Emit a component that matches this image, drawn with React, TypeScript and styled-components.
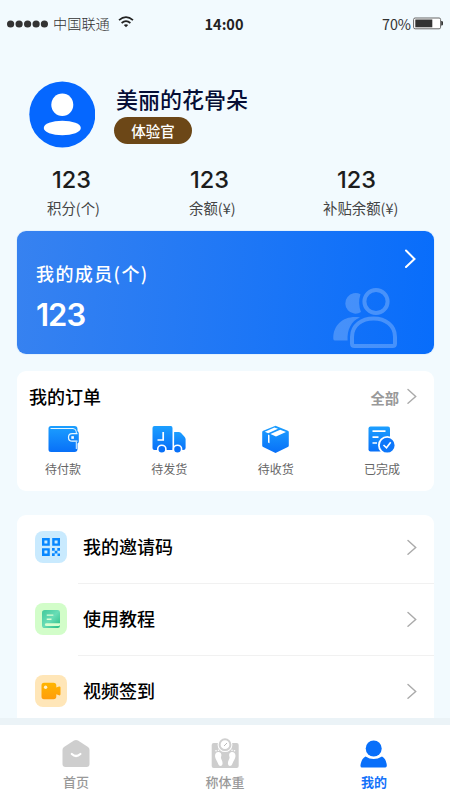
import React from "react";
import styled, { createGlobalStyle } from "styled-components";

const GlobalStyle = createGlobalStyle`
  * { box-sizing: border-box; }
  body {
    margin: 0;
    background: #f2fafe;
    font-family: "Noto Sans CJK SC", "Noto Sans", sans-serif;
    color: #000;
  }
  svg { display: block; flex: none; }
`;

const Screen = styled.div`
  width: 450px;
  height: 800px;
  overflow: hidden;
  display: flex;
  flex-direction: column;
  background: #f2fafe;
`;

const StatusBar = styled.header`
  height: 48px;
  flex: none;
  display: grid;
  grid-template-columns: 1fr auto 1fr;
  align-items: center;
  padding: 0 7px 1px;
  color: #333;
`;

const StatusGroup = styled.div<{ $end?: boolean }>`
  display: flex;
  align-items: center;
  justify-content: ${(p) => (p.$end ? "flex-end" : "flex-start")};
`;

const Carrier = styled.span`
  margin: -2px 8px 0 5px;
  font-size: 14.2px;
  line-height: 20px;
  font-weight: 300;
`;

const Clock = styled.span`
  font-size: 14.5px;
  line-height: 20px;
  font-weight: 700;
  color: #222;
  transform: translateX(-1px);
`;

const Percent = styled.span`
  margin-right: 2px;
  font-size: 14.3px;
  line-height: 20px;
`;

const Profile = styled.section`
  height: 106px;
  flex: none;
  display: flex;
  padding: 33px 0 0 29px;
`;

const ProfileText = styled.div`
  display: flex;
  flex-direction: column;
  align-items: flex-start;
  padding: 3px 0 0 19px;
`;

const Name = styled.h1`
  margin: 0 0 0 2px;
  font-size: 22px;
  line-height: 28px;
  font-weight: 500;
  color: #050d35;
`;

const Badge = styled.span`
  width: 78px;
  height: 27px;
  margin-top: 5px;
  border-radius: 14px;
  background: #6c4717;
  color: #fff;
  text-align: center;
  font-size: 14.5px;
  line-height: 27px;
  font-weight: 500;
`;

const Stats = styled.section`
  height: 77px;
  flex: none;
  display: flex;
  padding: 11px 0 0 47px;
`;

const Stat = styled.div<{ $width: number }>`
  width: ${(p) => p.$width}px;
  flex: none;
`;

const StatValue = styled.div<{ $indent: number }>`
  padding-left: ${(p) => p.$indent}px;
  font-family: Inter, sans-serif;
  font-size: 23.5px;
  line-height: 30px;
  font-weight: 500;
  color: #1c1c1c;
`;

const StatLabel = styled.div`
  margin-top: 3px;
  font-size: 14.4px;
  line-height: 20px;
  color: #444;
`;

const MembersCard = styled.section`
  width: 417px;
  height: 123px;
  flex: none;
  margin-left: 17px;
  padding: 17px 18px 5px 19px;
  display: flex;
  justify-content: space-between;
  border-radius: 9px;
  background: linear-gradient(94deg, #3782f0 0%, #086dfb 100%);
  box-shadow: 0 0 0 1px #e4f2fd;
  color: #fff;
`;

const MembersTitle = styled.h2`
  margin: 12px 0 0;
  font-size: 18px;
  line-height: 26px;
  font-weight: 500;
  letter-spacing: 1.4px;
`;

const MembersCount = styled.div`
  margin-top: 8px;
  font-family: Inter, sans-serif;
  font-size: 31px;
  line-height: 42px;
  font-weight: 600;
  letter-spacing: -1px;
`;

const MembersSide = styled.div`
  display: flex;
  flex-direction: column;
  align-items: flex-end;
  justify-content: space-between;
`;

const PeopleSlot = styled.div`
  margin-right: 18px;
`;

const Card = styled.section<{ $height: number; $top: number; $open?: boolean }>`
  width: 417px;
  height: ${(p) => p.$height}px;
  flex: none;
  margin: ${(p) => p.$top}px 0 0 17px;
  border-radius: ${(p) => (p.$open ? "9px 9px 0 0" : "9px")};
  background: #fff;
`;

const OrdersHead = styled.div`
  height: 50px;
  display: flex;
  align-items: center;
  justify-content: space-between;
  padding: 0 17px 0 12px;
`;

const OrdersTitle = styled.h2`
  margin: 0;
  font-size: 18px;
  line-height: 26px;
  font-weight: 500;
`;

const AllLink = styled.span`
  display: flex;
  align-items: center;
  gap: 8px;
  font-size: 14.3px;
  line-height: 20px;
  font-weight: 700;
  color: #999;

  span { padding-top: 4px; }
`;

const OrderTabs = styled.div`
  display: flex;
  justify-content: space-between;
  padding: 4px 33px 0 27px;
`;

const OrderTab = styled.div`
  width: 38px;
  display: flex;
  flex-direction: column;
  align-items: center;
  white-space: nowrap;
  font-size: 12px;
  line-height: 18px;
  color: #666;

  svg { margin-bottom: 7px; }
`;

const MenuRow = styled.div`
  height: 72px;
  display: flex;
  align-items: flex-start;
  padding-left: 18px;
`;

const MenuTile = styled.div<{ $color: string }>`
  width: 32px;
  height: 32px;
  flex: none;
  margin: 16px 11px 0 0;
  display: grid;
  place-items: center;
  border-radius: 8px;
  background: ${(p) => p.$color};
`;

const MenuBody = styled.div<{ $line: boolean }>`
  flex: 1;
  height: 69px;
  display: flex;
  align-items: center;
  justify-content: space-between;
  padding: 0 17px 5px 5px;
  border-bottom: 1px solid ${(p) => (p.$line ? "#f1f1f1" : "transparent")};
  font-size: 18px;
  line-height: 26px;
  font-weight: 500;
`;

const MenuLabel = styled.span`
  padding-bottom: 2px;
`;

const TabBar = styled.nav`
  height: 82px;
  flex: none;
  display: flex;
  justify-content: space-between;
  padding: 13px 56px 0 56px;
  border-top: 7px solid #ebf3f7;
  background: #fff;
`;

const TabItem = styled.div<{ $active?: boolean }>`
  width: 40px;
  display: flex;
  flex-direction: column;
  align-items: center;
  white-space: nowrap;
  font-size: 13px;
  line-height: 20px;
  font-weight: ${(p) => (p.$active ? 700 : 500)};
  color: ${(p) => (p.$active ? "#1472fa" : "#999")};

  svg { margin-bottom: 4px; }
`;

const SignalDots = () => (
  <svg width="41" height="8" viewBox="0 0 41 8" fill="#333">
    {[3.6, 12.1, 20.6, 29.1, 37.4].map((x) => (
      <circle key={x} cx={x} cy="4" r="3.6" />
    ))}
  </svg>
);

const Wifi = () => (
  <svg width="16" height="15" viewBox="0 0 16 15" fill="none" stroke="#222" strokeWidth="1.7">
    <path d="M1 4.2Q8-1.8 15 4.2M3.6 7Q8 3.2 12.4 7" />
    <path d="M5.8 9Q8 7.3 10.2 9L8 11.2Z" fill="#222" stroke="none" />
  </svg>
);

const Battery = () => (
  <svg width="30" height="13" viewBox="0 0 30 13">
    <rect x=".6" y="1" width="27" height="10.8" rx="1.5" fill="#fff" stroke="#666" />
    <rect x="2.3" y="2.5" width="17" height="7.8" fill="#333" />
    <path d="M28.2 4h1l.8 1v2.5l-.8 1h-1z" fill="#333" />
  </svg>
);

const Avatar = () => (
  <svg width="66" height="67" viewBox="0 0 66 67">
    <circle cx="33.3" cy="33.5" r="33" fill="#0567ff" />
    <ellipse cx="33.3" cy="23.7" rx="11" ry="11.3" fill="#fff" />
    <ellipse cx="33.3" cy="47" rx="18.5" ry="7.3" fill="#fff" />
  </svg>
);

const Chevron = ({ large }: { large?: boolean }) => (
  <svg
    width={large ? 12 : 10}
    height={large ? 20 : 16}
    viewBox={large ? "0 0 12 20" : "0 0 10 16"}
    fill="none"
    stroke={large ? "#fff" : "#aaa"}
    strokeWidth={large ? 2 : 1.4}
    strokeLinecap="round"
  >
    <path d={large ? "M2 2.5 10.5 11 2 19" : "M1 1.5 8.7 8.5 1 15.3"} />
  </svg>
);

const People = () => (
  <svg width="65" height="62" viewBox="332 287 65 62">
    <g fill="#fff" fillOpacity=".22">
      <path d="M359.5 294.3a10.3 10.3 0 1 0 .5 17.8Q356.5 303 359.5 294.3Z" />
      <path d="M359 317.5C344 315 332.3 324 332.3 338v1q0 1.500 2 1.500h12.300C346 330 350 321 359 317.500Z" />
    </g>
    <g fill="none" stroke="#fff" strokeOpacity=".24" strokeWidth="4">
      <circle cx="375" cy="301.500" r="11.600" />
      <path d="M351 343.500V337C351 325 361 318.600 372.500 318.600S394 325 394 337V343.500Q394 346 391.500 346H353.500Q351 346 351 343.500Z" />
    </g>
  </svg>
);

const BlueFill = ({ id }: { id: string }) => (
  <defs>
    <linearGradient id={id} x1="0" y1="0" x2="0" y2="1">
      <stop offset="0" stopColor="#1c9fff" />
      <stop offset="1" stopColor="#0870f8" />
    </linearGradient>
  </defs>
);

const Wallet = () => (
  <svg width="31" height="28" viewBox="48 425 31 28">
    <BlueFill id="wallet" />
    <path d="M51 426h23.500q3 0 3 3v2q1.300.5 1.300 2.500v8q0 1.500-1.300 2v5.500q0 3-3 3H51q-2.500 0-2.500-2.500V428.500Q48.500 426 51 426Z" fill="url(#wallet)" />
    <path d="M50.500 428.500H73q3.300.3 3.300 3.500V433M76.300 442V449" fill="none" stroke="#e8f7ff" />
    <path d="M77.500 433.700h-5.300q-3.700 0-3.700 3.700t3.700 3.700h5.300" fill="none" stroke="#e8f7ff" strokeWidth="1.200" />
    <rect x="71.300" y="436.200" width="2.600" height="2.600" fill="#fff" />
  </svg>
);

const Truck = () => (
  <svg width="34" height="28" viewBox="152.500 425 34 28">
    <BlueFill id="truck" />
    <path d="M155 426h16.300q1.700 0 1.700 2v22H155q-2 0-2-2v-20q0-2 2-2Z" fill="url(#truck)" />
    <path d="M174.600 432h4.500q1.500 0 2.500 1l3.600 4q.9 1 .9 2.500v8q0 2.500-2.500 2.500h-9Z" fill="url(#truck)" />
    <circle cx="162.300" cy="449.300" r="4.100" fill="#0870f8" stroke="#fff" strokeWidth="1.600" />
    <circle cx="178" cy="449.300" r="4.100" fill="#0870f8" stroke="#fff" strokeWidth="1.600" />
    <path d="M163.700 432v8H158" fill="none" stroke="#fff" strokeWidth="1.700" />
  </svg>
);

const Parcel = () => (
  <svg width="27" height="28" viewBox="264.500 425.500 27 28">
    <BlueFill id="parcel" />
    <path d="M278 426.200 290.300 431.200q1 .4 1 1.500V446q0 1-1 1.500L278 453.500 265.700 447.500q-1-.5-1-1.500V432.700q0-1.100 1-1.500Z" fill="url(#parcel)" />
    <path d="m267.300 432.300 9.700-4.300 3.500 1.300-9.800 4.400ZM272.900 434.600l9.800-4.400 5.800 2.300-10 4.600ZM270.500 435l1.500.7v8l-1.500-.7Z" fill="#fff" />
  </svg>
);

const OrderDone = () => (
  <svg width="27" height="28" viewBox="369.500 425.500 27 28">
    <BlueFill id="done" />
    <path d="M372 427h17.500q2 0 2 2V452H372q-2 0-2-2V429q0-2 2-2Z" fill="url(#done)" />
    <path d="M374 431.700h13M374 437.700h6M374 443.500h4.500" stroke="#fff" strokeWidth="1.700" />
    <circle cx="388.700" cy="445.700" r="8.300" fill="#0d77fa" stroke="#fff" strokeWidth="1.800" />
    <path d="m385 445.500 3 2.800 4.200-5.500" fill="none" stroke="#fff" strokeWidth="1.600" />
  </svg>
);

const QrCode = () => (
  <svg width="18" height="18" viewBox="0 0 18 18" fill="none" stroke="#0787ff" strokeWidth="2.400">
    <path d="M1.200 1.200h5.400v5.400H1.200ZM11.400 1.200h5.400v5.400h-5.400ZM1.200 11.400h5.400v5.400H1.200Z" />
    <path d="M10 10h2.700v2.700h-2.700ZM12.700 12.700h2.700v2.700h-2.700ZM10 15.300h2.700v2.700h-2.700ZM15.300 10h2.700v2.700h-2.700ZM15.500 15.500h2.500v2.500h-2.500Z" fill="#0787ff" stroke="none" />
  </svg>
);

const Book = () => (
  <svg width="18" height="18" viewBox="0 0 19 19">
    <defs>
      <linearGradient id="book" x1="0" y1="0" x2="1" y2="1">
        <stop offset="0" stopColor="#42c99a" />
        <stop offset=".5" stopColor="#69ddb6" />
        <stop offset="1" stopColor="#28bd83" />
      </linearGradient>
    </defs>
    <path d="M3 0h13.500Q19 0 19 2.500v14q0 2.500-2.500 2.500H3Q0 19 0 16V3Q0 0 3 0Z" fill="url(#book)" />
    <path d="M5 5.500h7M5 9.800h5" stroke="#dcffd3" strokeWidth="1.400" />
    <path d="M19 14H5q-2 0-2 1.500T5 17h12.500Q19 17 19 15Z" fill="#d9ffcf" />
  </svg>
);

const Camera = () => (
  <svg width="20" height="18" viewBox="0 0 20 18">
    <defs>
      <linearGradient id="camera" x1="0" y1="0" x2="0" y2="1">
        <stop offset="0" stopColor="#ffb500" />
        <stop offset="1" stopColor="#ff9d0b" />
      </linearGradient>
    </defs>
    <path d="M3 .8h9.500q2.800 0 2.800 2.700v2L18 4.500q1.500-.4 1.500 1v6.800q0 1.400-1.500 1l-2.700-1v2.200q0 2.700-2.800 2.700H3Q.5 17.200.5 14.500v-11Q.5.8 3 .8Z" fill="url(#camera)" />
    <circle cx="4.600" cy="5.300" r="1.700" fill="#fff0cb" />
  </svg>
);

const Home = () => (
  <svg width="28" height="30" viewBox="62 738 28 30">
    <path d="M74 740.500q2-1.200 4 0L88 747q1.500 1 1.500 3V764q0 3-3 3H65.500q-3 0-3-3V750q0-2 1.500-3Z" fill="#cecece" />
    <path d="M71.800 754q4.200 4 8.600 0" fill="none" stroke="#fff" strokeWidth="2.200" strokeLinecap="round" />
  </svg>
);

const Scale = () => (
  <svg width="28" height="30" viewBox="211 737 28 30">
    <rect x="211.700" y="742" width="27" height="25" rx="2" fill="#cecece" />
    <circle cx="225" cy="743.700" r="7.400" fill="#fff" />
    <circle cx="225" cy="743.700" r="5.400" fill="#fff" stroke="#d0d0d0" strokeWidth="2" />
    <path d="m224 745 3-3" stroke="#bbb" />
    <g fill="#fff">
      <path d="M215 755c0-3 2-4.500 4-4 2 .5 3 2.500 2 5-.5 2 2 4 1.500 7-.3 2.500-3.500 2.500-4.300 0-.8-3-3.200-5-3.200-8ZM235.500 755c0-3-2-4.500-4-4-2 .5-3 2.500-2 5 .5 2-2 4-1.500 7 .3 2.500 3.500 2.500 4.300 0 .8-3 3.200-5 3.200-8Z" />
      <circle cx="216" cy="749.800" r=".8" />
      <circle cx="218.500" cy="749.300" r=".8" />
      <circle cx="232" cy="749.300" r=".8" />
      <circle cx="234.500" cy="749.800" r=".8" />
    </g>
  </svg>
);

const Me = () => (
  <svg width="28" height="30" viewBox="360 737.500 28 30" fill="#086ffa">
    <circle cx="373.700" cy="748" r="8" />
    <path d="M365.500 756q8 5 16.500 0 4 2 4.800 8.500.2 2.500-1.500 2.500H362q-1.800 0-1.500-2.500Q361.500 758 365.500 756Z" />
  </svg>
);

const stats = [
  { value: "123", label: "积分(个)", width: 142, indent: 5 },
  { value: "123", label: "余额(¥)", width: 134, indent: 1 },
  { value: "123", label: "补贴余额(¥)", width: 90, indent: 14 },
];

const orders = [
  { label: "待付款", icon: <Wallet /> },
  { label: "待发货", icon: <Truck /> },
  { label: "待收货", icon: <Parcel /> },
  { label: "已完成", icon: <OrderDone /> },
];

const menu = [
  { label: "我的邀请码", color: "#c9eafe", icon: <QrCode /> },
  { label: "使用教程", color: "#d2fdc9", icon: <Book /> },
  { label: "视频签到", color: "#ffe6b8", icon: <Camera /> },
];

export default function App() {
  return (
    <>
      <GlobalStyle />
      <Screen>
        <StatusBar>
          <StatusGroup>
            <SignalDots />
            <Carrier>中国联通</Carrier>
            <Wifi />
          </StatusGroup>
          <Clock>14:00</Clock>
          <StatusGroup $end>
            <Percent>70%</Percent>
            <Battery />
          </StatusGroup>
        </StatusBar>

        <Profile>
          <Avatar />
          <ProfileText>
            <Name>美丽的花骨朵</Name>
            <Badge>体验官</Badge>
          </ProfileText>
        </Profile>

        <Stats>
          {stats.map((s) => (
            <Stat key={s.label} $width={s.width}>
              <StatValue $indent={s.indent}>{s.value}</StatValue>
              <StatLabel>{s.label}</StatLabel>
            </Stat>
          ))}
        </Stats>

        <MembersCard>
          <div>
            <MembersTitle>我的成员(个)</MembersTitle>
            <MembersCount>123</MembersCount>
          </div>
          <MembersSide>
            <Chevron large />
            <PeopleSlot>
              <People />
            </PeopleSlot>
          </MembersSide>
        </MembersCard>

        <Card $height={120} $top={17}>
          <OrdersHead>
            <OrdersTitle>我的订单</OrdersTitle>
            <AllLink>
              <span>全部</span>
              <Chevron />
            </AllLink>
          </OrdersHead>
          <OrderTabs>
            {orders.map((o) => (
              <OrderTab key={o.label}>
                {o.icon}
                {o.label}
              </OrderTab>
            ))}
          </OrderTabs>
        </Card>

        <Card $height={203} $top={24} $open>
          {menu.map((m, i) => (
            <MenuRow key={m.label}>
              <MenuTile $color={m.color}>{m.icon}</MenuTile>
              <MenuBody $line={i < menu.length - 1}>
                <MenuLabel>{m.label}</MenuLabel>
                <Chevron />
              </MenuBody>
            </MenuRow>
          ))}
        </Card>

        <TabBar>
          <TabItem>
            <Home />
            首页
          </TabItem>
          <TabItem>
            <Scale />
            称体重
          </TabItem>
          <TabItem $active>
            <Me />
            我的
          </TabItem>
        </TabBar>
      </Screen>
    </>
  );
}
